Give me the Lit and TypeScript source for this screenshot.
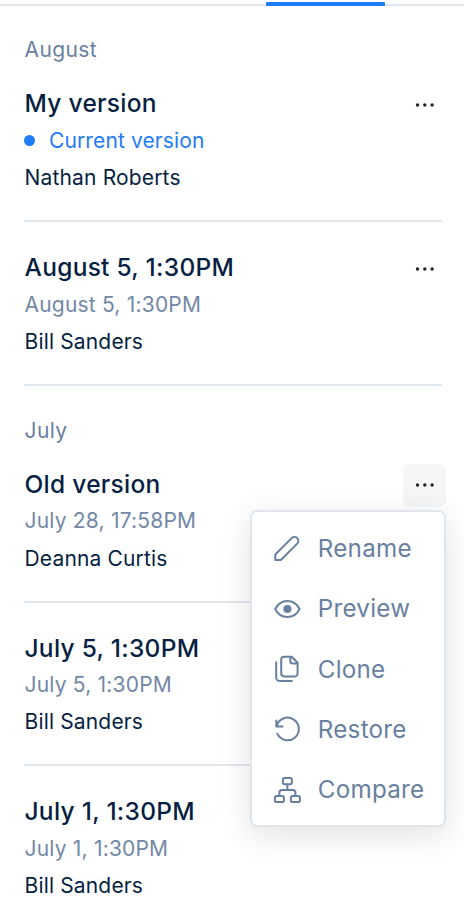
import { LitElement, html, css, svg, nothing } from "lit";
import { customElement, property } from "lit/decorators.js";
import { classMap } from "lit/directives/class-map.js";

interface Version {
  title: string;
  note: string;
  author: string;
  current?: boolean;
  open?: boolean;
}

interface Group {
  label: string;
  versions: Version[];
}

const GROUPS: Group[] = [
  {
    label: "August",
    versions: [
      { title: "My version", note: "Current version", author: "Nathan Roberts", current: true },
      { title: "August 5, 1:30PM", note: "August 5, 1:30PM", author: "Bill Sanders" },
    ],
  },
  {
    label: "July",
    versions: [
      { title: "Old version", note: "July 28, 17:58PM", author: "Deanna Curtis", open: true },
      { title: "July 5, 1:30PM", note: "July 5, 1:30PM", author: "Bill Sanders" },
      { title: "July 1, 1:30PM", note: "July 1, 1:30PM", author: "Bill Sanders" },
    ],
  },
];

const ICONS = {
  rename: svg`<path d="M2.3 27v-5.500L18.700 5.100a3.900 3.900 0 0 1 5.500 0 3.900 3.900 0 0 1 0 5.500L7.800 27z"/>`,
  preview: svg`<path d="M2.2 15c2.6-5.3 7-8.1 12.200-8.100S24 9.700 26.600 15c-2.600 5.300-7 8.100-12.200 8.100S4.800 20.300 2.200 15z"/><circle class="solid" cx="14.400" cy="15" r="4.100"/>`,
  clone: svg`<path d="M3.200 8.200v15.300a3.600 3.600 0 0 0 3.600 3.600h12.100M11 2.700h7.700l5.900 6.100v10.800a2.800 2.800 0 0 1-2.800 2.800H11a2.800 2.800 0 0 1-2.800-2.800V5.500A2.800 2.800 0 0 1 11 2.700zM17.300 2.900v4.400a2.300 2.300 0 0 0 2.300 2.300h4.900"/>`,
  restore: svg`<path d="M3.300 5.400v6.100h6.300M3.600 11.200a11.300 11.300 0 1 1 .7 7.500"/>`,
  compare: svg`<rect x="9.900" y="3.100" width="9" height="6.200" rx="1.700"/><rect x="1.900" y="20.900" width="9" height="6.200" rx="1.700"/><rect x="17.900" y="20.900" width="9" height="6.200" rx="1.700"/><path d="M14.400 9.300v5.800M6.400 20.900v-3.300a2.500 2.500 0 0 1 2.500-2.500h11a2.500 2.500 0 0 1 2.500 2.500v3.300"/>`,
};

const ACTIONS: { icon: keyof typeof ICONS; label: string }[] = [
  { icon: "rename", label: "Rename" },
  { icon: "preview", label: "Preview" },
  { icon: "clone", label: "Clone" },
  { icon: "restore", label: "Restore" },
  { icon: "compare", label: "Compare" },
];

@customElement("action-menu")
export class ActionMenu extends LitElement {
  static styles = css`
    :host {
      display: block;
      box-sizing: border-box;
      width: 196px;
      padding: 6.300px 0 4.500px;
      background: #fff;
      border: 2px solid #dfe6ee;
      border-radius: 7px;
      box-shadow: 0 8px 32px rgba(0, 0, 0, 0.12);
    }
    .action {
      display: flex;
      align-items: center;
      gap: 15.800px;
      height: 60.4px;
      padding-left: 21px;
      color: #6880a0;
      font-size: 24.200px;
      letter-spacing: 0.25px;
      white-space: nowrap;
    }
    .icon {
      flex: none;
      width: 29px;
      height: 30px;
      fill: none;
      stroke: currentColor;
      stroke-width: 2;
      stroke-linecap: round;
      stroke-linejoin: round;
    }
    .solid {
      fill: currentColor;
      stroke: none;
    }
  `;

  render() {
    return ACTIONS.map(
      (a) => html`<div class="action" role="menuitem">
        <svg class="icon" viewBox="0 0 29 30">${ICONS[a.icon]}</svg>
        <span>${a.label}</span>
      </div>`
    );
  }
}

@customElement("version-item")
export class VersionItem extends LitElement {
  @property({ attribute: false }) version!: Version;

  static styles = css`
    :host {
      display: flex;
      justify-content: space-between;
      box-sizing: border-box;
      height: 163.7px;
      padding-top: 26.450px;
      border-bottom: 2px solid #dfe6ee;
    }
    .line {
      display: flex;
      align-items: center;
      height: 37.1px;
      padding-left: 0.500px;
      white-space: nowrap;
      font-size: 21px;
      letter-spacing: 0.16px;
      color: #071f42;
    }
    .title {
      font-size: 24.500px;
      font-weight: 500;
      letter-spacing: 0.28px;
    }
    .note {
      letter-spacing: 0.2px;
      color: #7288a6;
    }
    .current {
      padding-left: 0;
      letter-spacing: 0.12px;
      color: #1f7cf7;
    }
    .dot {
      width: 11px;
      height: 11px;
      margin-right: 14px;
      border-radius: 50%;
      background: #1f7cf7;
    }
    .more {
      position: relative;
      display: flex;
      align-items: center;
      justify-content: center;
      width: 43px;
      height: 43px;
      margin: -1.400px -4px 0 0;
      border-radius: 7px;
    }
    .more.open {
      background: #f5f6f8;
    }
    .dots {
      width: 20px;
      height: 4px;
      fill: #222;
    }
    .menu {
      position: absolute;
      top: 46px;
      right: 0;
      z-index: 1;
    }
  `;

  render() {
    const v = this.version;
    return html`
      <div>
        <div class="line title">${v.title}</div>
        <div class=${classMap({ line: true, note: !v.current, current: !!v.current })}>
          ${v.current ? html`<span class="dot"></span>` : nothing}${v.note}
        </div>
        <div class="line">${v.author}</div>
      </div>
      <div class=${classMap({ more: true, open: !!v.open })}>
        <svg class="dots" viewBox="0 0 20 4">
          <circle cx="2.500" cy="2" r="1.700" />
          <circle cx="9.800" cy="2" r="1.700" />
          <circle cx="17.100" cy="2" r="1.700" />
        </svg>
        ${v.open ? html`<action-menu class="menu" role="menu"></action-menu>` : nothing}
      </div>
    `;
  }
}

@customElement("app-root")
export class AppRoot extends LitElement {
  static styles = css`
    :host {
      display: block;
      height: 918px;
      overflow: hidden;
      background: #fff;
      font-family: Inter, "Liberation Sans", sans-serif;
    }
    .tabs {
      display: flex;
      box-sizing: border-box;
      height: 5.500px;
      padding: 2px 0 0 266px;
      background: linear-gradient(#dfe6ee, #dfe6ee) 0 100% / 100% 2px no-repeat;
    }
    .active {
      width: 119px;
      height: 3.500px;
      border-radius: 1px;
      background: #1f7cf7;
    }
    .group {
      padding: 0 22px 0 24px;
    }
    .label {
      display: flex;
      align-items: center;
      height: 53px;
      padding: 17.800px 0 0 0.500px;
      margin-bottom: -17.800px;
      font-size: 21px;
      letter-spacing: 0.4px;
      color: #6880a0;
    }
  `;

  render() {
    return html`
      <div class="tabs"><div class="active"></div></div>
      ${GROUPS.map(
        (g) => html`<section class="group">
          <div class="label">${g.label}</div>
          ${g.versions.map((v) => html`<version-item .version=${v}></version-item>`)}
        </section>`
      )}
    `;
  }
}
